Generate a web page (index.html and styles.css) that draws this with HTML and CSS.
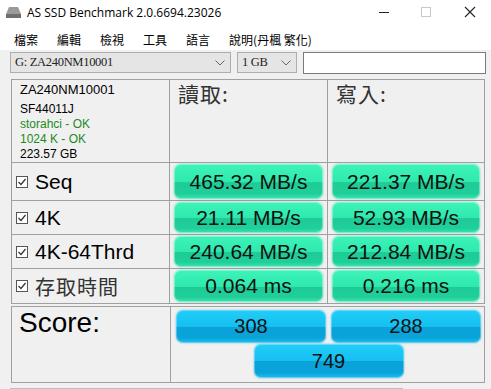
FILE: index.html
```html
<!DOCTYPE html>
<html lang="zh-Hant">
<head>
  <meta charset="UTF-8">
  <title>AS SSD Benchmark 2.0.6694.23026</title>
  <link rel="stylesheet" href="styles.css">
</head>
<body>
  <div class="window">
    <!-- Barra de título -->
    <div class="titlebar">
      <svg class="app-icon" width="17" height="13" viewBox="0 0 17 13">
        <path d="M4 1 H13 L16 8 H1 Z" fill="#9a9a9a"/>
        <rect x="1" y="8" width="15" height="4" fill="#6f6f6f"/>
      </svg>
      <span class="title">AS SSD Benchmark 2.0.6694.23026</span>
      <div class="controls">
        <span class="ctl min"><svg width="12" height="10" viewBox="0 0 12 10"><path d="M1 5.5 H11" stroke="#222" stroke-width="1"/></svg></span>
        <span class="ctl max"><svg width="11" height="11" viewBox="0 0 11 11"><rect x="0.5" y="0.5" width="9" height="9" fill="none" stroke="#c8c8c8"/></svg></span>
        <span class="ctl close"><svg width="12" height="12" viewBox="0 0 12 12"><path d="M1 1 L11 11 M11 1 L1 11" stroke="#222" stroke-width="1.1"/></svg></span>
      </div>
    </div>

    <!-- Menú -->
    <nav class="menu">
      <span>檔案</span>
      <span>編輯</span>
      <span>檢視</span>
      <span>工具</span>
      <span>語言</span>
      <span>說明(丹楓 繁化)</span>
    </nav>

    <!-- Selección de unidad y tamaño -->
    <div class="toolbar">
      <div class="combo drive">
        <span>G: ZA240NM10001</span>
        <svg width="10" height="6" viewBox="0 0 10 6"><path d="M0.5 0.5 L5 5 L9.5 0.5" fill="none" stroke="#666"/></svg>
      </div>
      <div class="combo size">
        <span>1 GB</span>
        <svg width="10" height="6" viewBox="0 0 10 6"><path d="M0.5 0.5 L5 5 L9.5 0.5" fill="none" stroke="#666"/></svg>
      </div>
      <div class="path-box"></div>
    </div>

    <!-- Resultados -->
    <div class="results">
      <div class="cell info">
        <div class="model">ZA240NM10001</div>
        <div>SF44011J</div>
        <div class="ok">storahci - OK</div>
        <div class="ok">1024 K - OK</div>
        <div>223.57 GB</div>
      </div>
      <div class="cell head">讀取:</div>
      <div class="cell head">寫入:</div>

      <div class="cell label"><svg class="check" width="12" height="12" viewBox="0 0 12 12"><rect x="0.5" y="0.5" width="11" height="11" fill="#fff" stroke="#555"/><path d="M2.5 6 L5 8.5 L9.5 3" fill="none" stroke="#333" stroke-width="1.2"/></svg>Seq</div>
      <div class="cell val"><div class="btn green">465.32 MB/s</div></div>
      <div class="cell val"><div class="btn green">221.37 MB/s</div></div>

      <div class="cell label"><svg class="check" width="12" height="12" viewBox="0 0 12 12"><rect x="0.5" y="0.5" width="11" height="11" fill="#fff" stroke="#555"/><path d="M2.5 6 L5 8.5 L9.5 3" fill="none" stroke="#333" stroke-width="1.2"/></svg>4K</div>
      <div class="cell val"><div class="btn green">21.11 MB/s</div></div>
      <div class="cell val"><div class="btn green">52.93 MB/s</div></div>

      <div class="cell label"><svg class="check" width="12" height="12" viewBox="0 0 12 12"><rect x="0.5" y="0.5" width="11" height="11" fill="#fff" stroke="#555"/><path d="M2.5 6 L5 8.5 L9.5 3" fill="none" stroke="#333" stroke-width="1.2"/></svg>4K-64Thrd</div>
      <div class="cell val"><div class="btn green">240.64 MB/s</div></div>
      <div class="cell val"><div class="btn green">212.84 MB/s</div></div>

      <div class="cell label cjk"><svg class="check" width="12" height="12" viewBox="0 0 12 12"><rect x="0.5" y="0.5" width="11" height="11" fill="#fff" stroke="#555"/><path d="M2.5 6 L5 8.5 L9.5 3" fill="none" stroke="#333" stroke-width="1.2"/></svg>存取時間</div>
      <div class="cell val"><div class="btn green">0.064 ms</div></div>
      <div class="cell val"><div class="btn green">0.216 ms</div></div>
    </div>

    <!-- Puntuación -->
    <div class="score">
      <div class="cell score-label">Score:</div>
      <div class="cell score-vals">
        <div class="btn blue">308</div>
        <div class="btn blue">288</div>
        <div class="btn blue total">749</div>
      </div>
    </div>

    <div class="progress"></div>
  </div>
</body>
</html>
```

FILE: styles.css
```css
/* Ventana general */
body {
  margin: 0;
  background: #f0f0f0;
  font-family: "Liberation Sans", Arial, sans-serif;
  color: #000;
  overflow: hidden;
}
.window {
  width: 491px;
  height: 389px;
  overflow: hidden;
}
/* Barra de título */
.titlebar {
  height: 28px;
  box-sizing: border-box;
  padding-bottom: 4px;
  background: #fff;
  display: flex;
  align-items: center;
}
.app-icon {
  margin-left: 5px;
  margin-right: 5px;
}
.title {
  font-family: "Open Sans", "Liberation Sans", sans-serif;
  font-size: 12px;
  color: #000;
}
.controls {
  margin-left: auto;
  display: flex;
  height: 24px;
}
.ctl {
  display: flex;
  align-items: center;
  justify-content: center;
}
.ctl.min { width: 42px; }
.ctl.max { width: 43px; }
.ctl.close { width: 43px; }
/* Menú */
.menu {
  height: 22px;
  background: #fff;
  display: flex;
  align-items: center;
  padding-left: 5px;
  gap: 1px;
  font-family: "Noto Sans CJK TC", sans-serif;
  font-size: 12px;
}
.menu span {
  padding: 0 9px;
}
/* Selectores */
.toolbar {
  margin-top: 2px;
  height: 21px;
  display: flex;
  padding-left: 10px;
}
.combo {
  box-sizing: border-box;
  height: 21px;
  background: #e5e5e5;
  border: 1px solid #adadad;
  display: flex;
  align-items: center;
  justify-content: space-between;
  padding: 0 4px 0 4px;
  font-family: "Liberation Serif", "Times New Roman", serif;
  font-size: 12.5px;
  letter-spacing: -0.3px;
  color: #222;
}
.combo.drive { width: 221px; }
.combo.size { width: 60px; margin-left: 6px; }
.combo svg { margin-right: 1px; }
.path-box {
  box-sizing: border-box;
  margin-left: 6px;
  width: 183px;
  height: 22px;
  background: #fff;
  border: 1px solid #7a7a7a;
}
/* Tabla de resultados */
.results {
  margin: 6px 0 0 11px;
  width: 474px;
  box-sizing: border-box;
  padding: 1px;
  gap: 1px;
  background: #a0a0a0;
  display: grid;
  grid-template-columns: 157px 157px 156px;
  grid-template-rows: 82px 37px 33px 33px 34px;
}
.cell {
  background: #f0f0f0;
}
.info {
  padding: 0 0 0 8px;
  font-size: 12px;
  line-height: 15px;
}
.info .model {
  font-size: 13px;
  line-height: 20px;
  margin-bottom: 2px;
}
.info .ok {
  color: #1d8a1d;
}
.head {
  font-family: "Noto Sans CJK TC", sans-serif;
  font-size: 21px;
  line-height: 26px;
  color: #333;
  padding-left: 8px;
  letter-spacing: 1px;
}
.label {
  display: flex;
  align-items: center;
  gap: 7px;
  padding-left: 4px;
  font-size: 21px;
}
.label.cjk {
  font-family: "Noto Sans CJK TC", sans-serif;
  font-size: 20px;
  color: #333;
  letter-spacing: 1px;
}
.val {
  display: flex;
  padding: 1px 4px;
}
/* Botones con brillo */
.btn {
  flex: 1;
  display: flex;
  align-items: center;
  justify-content: center;
  border-radius: 7px;
  font-size: 21px;
  color: #111;
}
.green {
  background: linear-gradient(to bottom, #3ef3b9 0%, #2ee9ad 52%, #1fcb96 53%, #1fcf99 85%, #3be6b0 100%);
  box-shadow: inset 0 0 0 1px rgba(255, 255, 255, 0.35), 0 0 2px rgba(20, 200, 150, 0.6);
}
.score {
  margin: 2px 0 0 11px;
  width: 474px;
  box-sizing: border-box;
  padding: 1px;
  gap: 1px;
  background: #a0a0a0;
  display: grid;
  grid-template-columns: 158px 313px;
  grid-template-rows: 75px;
}
.score-label {
  font-size: 28px;
  line-height: 32px;
  padding-left: 7px;
}
.score-vals {
  display: grid;
  grid-template-columns: 150px 150px;
  grid-template-rows: 33px 34px;
  column-gap: 5px;
  row-gap: 1px;
  padding: 3px 0 0 5px;
}
.blue {
  font-size: 20px;
  background: linear-gradient(to bottom, #22cdf8 0%, #14c0f0 50%, #0aa2d8 51%, #0aa4da 85%, #1fc0ee 100%);
  box-shadow: inset 0 0 0 1px rgba(255, 255, 255, 0.3), 0 0 2px rgba(10, 160, 220, 0.6);
}
.total {
  grid-column: 1 / 3;
  width: 150px;
  justify-self: center;
}
.progress {
  margin: 5px 0 0 10px;
  width: 393px;
  height: 20px;
  box-sizing: border-box;
  border: 1px solid #bcbcbc;
  background: #e6e6e6;
}
```
